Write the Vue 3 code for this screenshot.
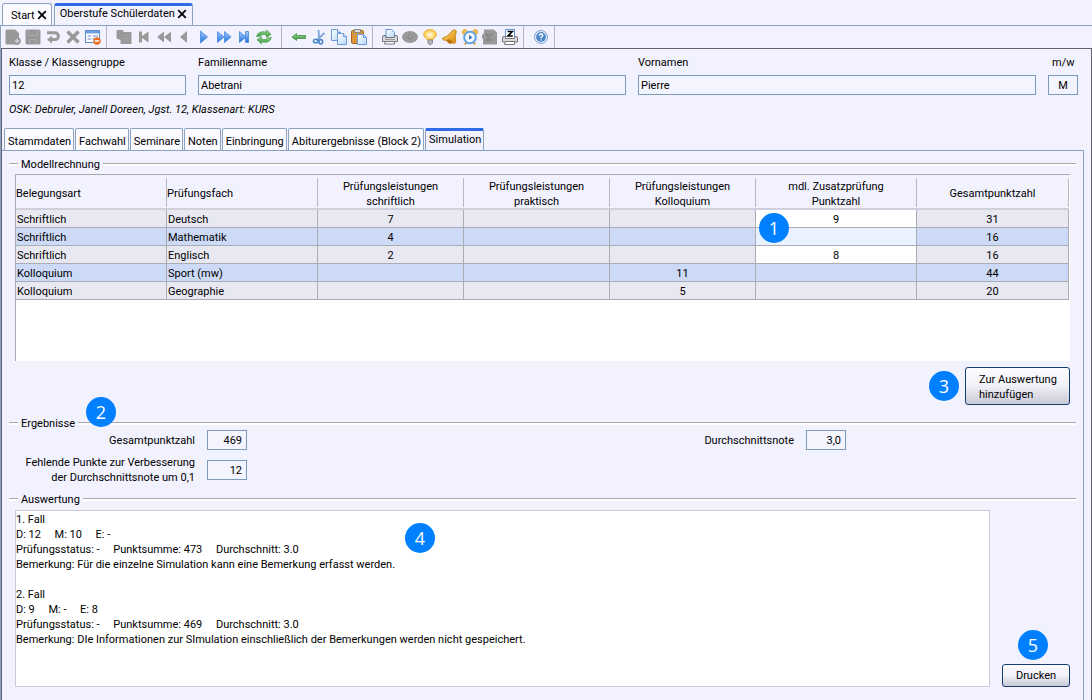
<script setup>
import { ref } from 'vue'

const subTabs = ['Stammdaten', 'Fachwahl', 'Seminare', 'Noten', 'Einbringung', 'Abiturergebnisse (Block 2)', 'Simulation']
const activeTab = ref('Simulation')

const groups = [
  ['Neu', 'Speichern', 'Rückgängig', 'Löschen', 'Formular'],
  ['Datensätze', 'Erster', 'Schnell zurück', 'Zurück', 'Weiter', 'Schnell vor', 'Letzter', 'Aktualisieren'],
  ['Pfeil zurück', 'Ausschneiden', 'Kopieren', 'Einfügen'],
  ['Drucken', 'Ansicht', 'Hinweis', 'Glocke', 'Wecker', 'Summe', 'Zeugnisdruck'],
  ['Hilfe'],
]

const rows = ref([
  { art: 'Schriftlich', fach: 'Deutsch', s: '7', p: '', k: '', z: '9', edit: true, g: '31' },
  { art: 'Schriftlich', fach: 'Mathematik', s: '4', p: '', k: '', z: '', edit: true, g: '16' },
  { art: 'Schriftlich', fach: 'Englisch', s: '2', p: '', k: '', z: '8', edit: true, g: '16' },
  { art: 'Kolloquium', fach: 'Sport (mw)', s: '', p: '', k: '11', z: '', edit: false, g: '44' },
  { art: 'Kolloquium', fach: 'Geographie', s: '', p: '', k: '5', z: '', edit: false, g: '20' },
])

const report = ref(`1. Fall
D: 12     M: 10     E: -
Prüfungsstatus: -     Punktsumme: 473     Durchschnitt: 3.0
Bemerkung: Für die einzelne Simulation kann eine Bemerkung erfasst werden.

2. Fall
D: 9     M: -     E: 8
Prüfungsstatus: -     Punktsumme: 469     Durchschnitt: 3.0
Bemerkung: DIe Informationen zur SImulation einschließlich der Bemerkungen werden nicht gespeichert.`)
</script>

<template>
  <div class="app">
    <svg class="defs" width="0" height="0" aria-hidden="true">
      <defs>
        <linearGradient id="gBlue" x1="0" y1="0" x2="0" y2="1"><stop offset="0" stop-color="#a8d0ff" /><stop offset="1" stop-color="#1f6fdc" /></linearGradient>
        <linearGradient id="gGreen" x1="0" y1="0" x2="0" y2="1"><stop offset="0" stop-color="#a5dd98" /><stop offset="1" stop-color="#2f9137" /></linearGradient>
        <linearGradient id="gPaper" x1="0" y1="0" x2="1" y2="1"><stop offset="0" stop-color="#ffffff" /><stop offset="1" stop-color="#b9d8f7" /></linearGradient>
        <linearGradient id="gGold" x1="0" y1="0" x2="1" y2="1"><stop offset="0" stop-color="#fbd774" /><stop offset="1" stop-color="#d98a08" /></linearGradient>
        <radialGradient id="gBulb"><stop offset="0" stop-color="#fffdf0" /><stop offset="1" stop-color="#ffc83a" /></radialGradient>
      </defs>
    </svg>

    <nav class="doc-tabs" aria-label="Dokumente">
      <div class="doc-tab">
        <button type="button" class="tab-name">Start</button>
        <button type="button" class="close" aria-label="Start schließen">
          <svg width="10" height="10" viewBox="0 0 10 10"><path d="M1.2 1.2L8.8 8.8M8.8 1.2L1.2 8.8" stroke="#000" stroke-width="1.8" /></svg>
        </button>
      </div>
      <div class="doc-tab current">
        <button type="button" class="tab-name">Oberstufe Schülerdaten</button>
        <button type="button" class="close" aria-label="Oberstufe Schülerdaten schließen">
          <svg width="10" height="10" viewBox="0 0 10 10"><path d="M1.2 1.2L8.8 8.8M8.8 1.2L1.2 8.8" stroke="#000" stroke-width="1.8" /></svg>
        </button>
      </div>
    </nav>

    <div class="window">
      <div class="toolbar" role="toolbar" aria-label="Werkzeuge">
        <div v-for="(group, gi) in groups" :key="gi" class="tool-group" :class="'tg' + gi">
          <button v-for="name in group" :key="name" type="button" class="tool" :aria-label="name">
            <svg width="16" height="16" viewBox="0 0 16 16">
              <g v-if="name === 'Neu'"><path d="M2 0.5H10L14 4V9A4 4 0 0 1 13 15.5H2Q0.5 15.5 0.5 14V2Q0.5 0.5 2 0.5Z" fill="#999" /><circle cx="12" cy="12" r="3.8" fill="#999" /><path d="M12 9.8V14.2M9.8 12H14.2" stroke="#d2d2da" stroke-width="1.3" /></g>
              <g v-else-if="name === 'Speichern'"><rect x="0.5" y="0.5" width="15" height="15" rx="1.5" fill="#999" /><path d="M3.5 1V6.5H12.5V1M4.5 15V10.5H11.5V15" fill="none" stroke="#ababaf" /></g>
              <g v-else-if="name === 'Rückgängig'"><path d="M2 3.8H10A3.4 3.4 0 0 1 10 10.6H6" fill="none" stroke="#999" stroke-width="3" /><path d="M2 10.6L7 6.6V14.6Z" fill="#999" /></g>
              <path v-else-if="name === 'Löschen'" d="M2.5 2.5L13.5 13.5M13.5 2.5L2.5 13.5" stroke="#999" stroke-width="3.4" />
              <g v-else-if="name === 'Formular'"><rect x="0.5" y="1.5" width="14" height="12" fill="#fff" stroke="#5c8bc9" /><rect x="1" y="2" width="13" height="2.5" fill="#6fa0df" /><path d="M2.5 7H6M2.5 10H6" stroke="#5f86c2" stroke-width="1.2" /><path d="M7.5 7H13M7.5 10H11" stroke="#8fb4e4" stroke-width="1.4" /><circle cx="12" cy="12" r="3.7" fill="#e96e20" /><path d="M9.8 12H14.2" stroke="#fff" stroke-width="1.5" /></g>
              <g v-else-if="name === 'Datensätze'"><path d="M0.5 1.5Q4 0 7.5 1.5V3H15.5V15H4.5V11L0.5 9.5Z" fill="#999" /><path d="M6 6.5H14M6 9.5H14M6 12.500H14" stroke="#a9a9ad" stroke-width="0.6" /></g>
              <path v-else-if="name === 'Erster'" d="M3 2.5H6V7L12.5 2.5V13.5L6 9V13.5H3Z" fill="#999" />
              <path v-else-if="name === 'Schnell zurück'" d="M8 2.5V13.5L1 8ZM15 2.5V13.5L8 8Z" fill="#999" />
              <path v-else-if="name === 'Zurück'" d="M11 2V14L4 8Z" fill="#999" />
              <path v-else-if="name === 'Weiter'" d="M4.5 2L11.5 8L4.5 14Z" fill="url(#gBlue)" stroke="#4287df" stroke-width="0.8" />
              <path v-else-if="name === 'Schnell vor'" d="M1.5 2.5L8 8L1.5 13.5ZM8.5 2.5L15 8L8.5 13.5Z" fill="url(#gBlue)" stroke="#4287df" stroke-width="0.8" />
              <path v-else-if="name === 'Letzter'" d="M3.5 2.5L9.5 7.5V2.5H12.5V13.5H9.5V8.5L3.5 13.5Z" fill="url(#gBlue)" stroke="#4287df" stroke-width="0.8" />
              <g v-else-if="name === 'Aktualisieren'" fill="url(#gGreen)" stroke="#46994a" stroke-width="0.7"><path d="M0.6 7.5Q2 2.2 8 2.8L10.5 3.3V1L15 5.2L10.5 8.4V6Q5.5 4.5 4.2 7.2Z" /><path d="M15.4 8.5Q14 13.8 8 13.2L5.5 12.7V15L1 10.8L5.5 7.6V10Q10.5 11.5 11.8 8.8Z" /></g>
              <path v-else-if="name === 'Pfeil zurück'" d="M1 8L5.5 4.5V6.5H14.5V9.5H5.5V11.5Z" fill="url(#gGreen)" stroke="#3c8f45" stroke-width="0.8" />
              <g v-else-if="name === 'Ausschneiden'" fill="none" stroke="#4b87c8"><path d="M7.5 1L8.2 10M13.5 4L5.5 11.5" stroke="#7aa6d8" stroke-width="1.8" /><ellipse cx="4.8" cy="12" rx="2.3" ry="1.8" stroke-width="1.6" /><ellipse cx="9.8" cy="12.8" rx="1.8" ry="2.2" stroke-width="1.6" /></g>
              <g v-else-if="name === 'Kopieren'" fill="url(#gPaper)" stroke="#6c9cda"><path d="M0.5 0.5H6.5L9.5 3.5V11.5H0.5Z" /><path d="M6.5 0.5V3.5H9.5" /><path d="M6.5 4.5H12.5L15.5 7.5V15.5H6.5Z" /><path d="M12.5 4.5V7.5H15.5" /></g>
              <g v-else-if="name === 'Einfügen'"><rect x="0.5" y="1.5" width="12" height="13" rx="1" fill="#d9963c" stroke="#a3661e" /><rect x="3.5" y="0.5" width="6" height="3" fill="#ddd" stroke="#888" /><path d="M6.5 5.5H12.5L15.5 8.5V15.5H6.5Z" fill="url(#gPaper)" stroke="#6c9cda" /><path d="M12.5 5.5V8.5H15.5" fill="none" stroke="#6c9cda" /></g>
              <g v-else-if="name === 'Drucken'"><path d="M4 8V0.5H9.5L12.5 3.5V8" fill="url(#gPaper)" stroke="#6096dc" /><path d="M0.5 8Q0.5 6.5 2 6.5H3.5V8.5H12.5V6.5H14Q15.5 6.5 15.5 8V12.5H0.5Z" fill="#d9d9dc" stroke="#77777c" /><path d="M3.5 12.5H12.5V15H2.5Z" fill="#fff" stroke="#77777c" /><path d="M3 10.5H13" stroke="#999" /></g>
              <g v-else-if="name === 'Ansicht'"><ellipse cx="8" cy="8" rx="8" ry="6" fill="#999" /><circle cx="8" cy="8" r="2.8" fill="#8c8c8c" /><circle cx="8.5" cy="7.5" r="1" fill="#bbb" /></g>
              <g v-else-if="name === 'Hinweis'"><path d="M5.5 11Q5.5 9.8 3.5 8.8A6.3 4.8 0 1 1 12.5 8.8Q10.5 9.8 10.5 11Z" fill="url(#gBulb)" stroke="#e2a32c" stroke-width="0.9" /><path d="M6 11H10.5V14L9 15.5H7.2L6 14Z" fill="#b8b8bc" stroke="#77777c" stroke-width="0.8" /></g>
              <g v-else-if="name === 'Glocke'"><path d="M13 0.8Q15 1.5 14 4Q12.8 8 13.8 13L12 14.8Q7 10.5 1 11L0.6 9Q6 7.5 8.500 3.5Q10.500 0.5 13 0.8Z" fill="url(#gGold)" stroke="#c07d11" stroke-width="0.8" /><ellipse cx="7.5" cy="12.5" rx="3" ry="1.8" transform="rotate(25 7.5 12.5)" fill="#b86e0a" /></g>
              <g v-else-if="name === 'Wecker'"><circle cx="2.8" cy="3" r="2.5" fill="#f3be4a" stroke="#d49429" stroke-width="0.6" /><circle cx="13.2" cy="3" r="2.5" fill="#f3be4a" stroke="#d49429" stroke-width="0.6" /><path d="M3 15.5L4.5 13M13 15.5L11.5 13" stroke="#d49429" stroke-width="1.8" /><circle cx="8" cy="8.5" r="5.8" fill="#f4f9ff" stroke="#62a0e2" stroke-width="2" /><path d="M7 6L10.5 8.5L7 10.8Z" fill="#3b6db0" /></g>
              <g v-else-if="name === 'Summe'"><path d="M2 0.5H12L15 3.5V15.5H1V10L0 9V6L2 4Z" fill="#999" /><path d="M3.5 5.5H11M3.5 11H11M4 6L8 8.2L4 11" stroke="#858585" stroke-width="1.4" fill="none" /></g>
              <g v-else-if="name === 'Zeugnisdruck'"><path d="M3.5 9V0.5H12.5V9" fill="#fff" stroke="#6096dc" /><path d="M5.5 2.5H10.2L6 7H10.8" fill="none" stroke="#000" stroke-width="1.7" /><path d="M0.5 9Q0.5 7.5 2 7.5H3.5V9.5H12.5V7.5H14Q15.5 7.5 15.5 9V13H0.5Z" fill="#d9d9dc" stroke="#77777c" /><path d="M3.5 12.5H12.5V15.5H2.5Z" fill="#fff" stroke="#77777c" /></g>
              <g v-else><circle cx="8" cy="8" r="6.5" fill="#e4edf9" stroke="#7da3d6" /><circle cx="8" cy="8" r="4.9" fill="#4f86ca" /><path d="M6.2 6.8Q6.3 5 8 5Q9.8 5 9.8 6.5Q9.8 7.5 8 8.4V9.3M8 10.3V11.6" fill="none" stroke="#fff" stroke-width="1.3" /></g>
            </svg>
          </button>
        </div>
      </div>

      <main class="content">
        <div class="person">
          <div class="field"><label for="klasse">Klasse / Klassengruppe</label><input id="klasse" type="text" value="12" /></div>
          <div class="field"><label for="fam">Familienname</label><input id="fam" type="text" value="Abetrani" /></div>
          <div class="field"><label for="vor">Vornamen</label><input id="vor" type="text" value="Pierre" /></div>
          <div class="field mw"><label for="mw">m/w</label><input id="mw" type="text" value="M" /></div>
        </div>
        <p class="osk">OSK: Debruler, Janell Doreen, Jgst. 12, Klassenart: KURS</p>

        <div class="sub-tabs" role="tablist">
          <button v-for="t in subTabs" :key="t" type="button" role="tab" class="sub-tab" :class="{ active: t === activeTab }" :aria-selected="t === activeTab" @click="activeTab = t">{{ t }}</button>
        </div>

        <div class="pane">
          <section class="model">
            <h2 class="legend">Modellrechnung</h2>
            <div class="table-box">
              <table>
                <colgroup><col class="c-art" /><col class="c-fach" /><col class="c-num" /><col class="c-num" /><col class="c-num" /><col class="c-zus" /><col class="c-ges" /></colgroup>
                <thead>
                  <tr>
                    <th class="l"><span>Belegungsart</span></th>
                    <th class="l"><span>Prüfungsfach</span></th>
                    <th><span>Prüfungsleistungen<br />schriftlich</span></th>
                    <th><span>Prüfungsleistungen<br />praktisch</span></th>
                    <th><span>Prüfungsleistungen<br />Kolloquium</span></th>
                    <th><span>mdl. Zusatzprüfung<br />Punktzahl</span></th>
                    <th><span>Gesamtpunktzahl</span></th>
                  </tr>
                </thead>
                <tbody>
                  <tr v-for="r in rows" :key="r.fach">
                    <td class="l">{{ r.art }}</td>
                    <td class="l">{{ r.fach }}</td>
                    <td>{{ r.s }}</td>
                    <td>{{ r.p }}</td>
                    <td>{{ r.k }}</td>
                    <td :class="{ edit: r.edit }"><input v-if="r.edit" v-model="r.z" type="text" :aria-label="'Zusatzprüfung ' + r.fach" /></td>
                    <td>{{ r.g }}</td>
                  </tr>
                </tbody>
              </table>
              <span class="badge b1">1</span>
            </div>
            <div class="add-row">
              <span class="num">3</span>
              <button type="button" class="btn add">Zur Auswertung<br />hinzufügen</button>
            </div>
          </section>

          <section class="results">
            <h2 class="legend">Ergebnisse</h2>
            <span class="badge b2">2</span>
            <div class="result-grid">
              <label for="gp">Gesamtpunktzahl</label>
              <input id="gp" type="text" value="469" />
              <label for="dn">Durchschnittsnote</label>
              <input id="dn" type="text" value="3,0" />
              <label for="fp" class="first">Fehlende Punkte zur Verbesserung<br />der Durchschnittsnote um 0,1</label>
              <input id="fp" type="text" value="12" />
            </div>
          </section>

          <section class="report">
            <h2 id="report-title" class="legend">Auswertung</h2>
            <div class="report-row">
              <div class="report-box">
                <textarea v-model="report" aria-labelledby="report-title" spellcheck="false"></textarea>
                <span class="badge b4">4</span>
              </div>
              <div class="print-col">
                <span class="num">5</span>
                <button type="button" class="btn print">Drucken</button>
              </div>
            </div>
          </section>
        </div>
      </main>
    </div>
  </div>
</template>

<style>
body {
  background: #f2f2ff;
}
</style>

<style scoped>
.app,
.app * {
  box-sizing: border-box;
}
.app {
  display: flex;
  flex-direction: column;
  min-height: 100vh;
  background: #f2f2ff;
  color: #000;
  font: 11px/15px Roboto, "Open Sans", sans-serif;
}
.defs {
  position: absolute;
}
button,
input,
textarea {
  font: inherit;
  color: inherit;
  margin: 0;
}
button {
  cursor: pointer;
}
.doc-tabs {
  display: flex;
  gap: 2px;
  height: 25px;
  padding: 3px 0 0 2px;
}
.doc-tab {
  display: flex;
  align-items: center;
  gap: 2px;
  padding: 1px 4px 0 8px;
  border: 1px solid #8ba2c0;
  border-bottom: 0;
  border-radius: 3px 3px 0 0;
  background: #fafaff;
}
.doc-tab.current {
  padding: 0 5px 4px;
  border-top: 3px solid #2f6be6;
  background: #f2f2ff;
}
.tab-name,
.close {
  padding: 0;
  border: 0;
  background: none;
}
.close {
  display: flex;
}
.window {
  display: flex;
  flex: 1;
  flex-direction: column;
  border-top: 1px solid #8ba2c0;
  border-left: 1px solid #8ba2c0;
}
.toolbar {
  display: flex;
  height: 22px;
  padding-left: 2px;
}
.tool-group {
  display: flex;
  align-items: center;
  padding-right: 3px;
  margin-right: 7px;
  border-right: 1px solid #b4b4be;
}
.tg1 {
  padding-right: 7px;
}
.tool {
  display: flex;
  width: 20px;
  padding: 2px;
  border: 0;
  background: none;
}
.content {
  display: flex;
  flex: 1;
  flex-direction: column;
  border: 1px solid #62626e;
  border-bottom: 0;
}
.person {
  display: grid;
  grid-template-columns: 177px 428fr 398fr 30px;
  gap: 12px;
  padding: 6px 13px 0 7px;
}
.field {
  display: flex;
  flex-direction: column;
  gap: 5px;
  min-width: 0;
}
.field input,
.result-grid input {
  width: 100%;
  height: 20px;
  padding: 0 2px;
  border: 1px solid #7a9abf;
  background: #f4f4ff;
}
.mw label {
  padding-left: 4px;
}
.mw input {
  text-align: center;
}
.osk {
  margin: 7px 0 0 7px;
  font-style: italic;
}
.sub-tabs {
  display: flex;
  gap: 1px;
  height: 33px;
  padding: 11px 0 0 2px;
}
.sub-tab {
  padding: 3px 2px 0 3px;
  border: 1px solid #8ba2c0;
  border-bottom: 0;
  border-radius: 2px 2px 0 0;
  background: #fafaff;
  white-space: nowrap;
}
.sub-tab.active {
  margin-bottom: -1px;
  padding-bottom: 3px;
  padding-top: 0;
  border-top: 3px solid #2f6be6;
  background: #f2f2ff;
}
.pane {
  display: flex;
  flex: 1;
  flex-direction: column;
  margin-right: 7px;
  padding: 6px 7px 13px;
  border-top: 1px solid #8ba2c0;
  border-right: 1px solid #8ba2c0;
}
.legend {
  display: flex;
  align-items: center;
  gap: 3px;
  height: 14px;
  margin: 0;
  font: inherit;
}
.legend::before,
.legend::after {
  width: 9px;
  height: 2px;
  border-top: 1px solid #a8a8b0;
  background: #fff;
  content: "";
}
.legend::after {
  flex: 1;
}
.table-box {
  position: relative;
  height: 187px;
  margin: 3px 6px 0;
  padding-right: 1px;
  border-top: 1px solid #a8a8b0;
  border-left: 1px solid #a8a8b0;
  background: #fff;
}
table {
  width: 100%;
  border-spacing: 0;
  table-layout: fixed;
}
.c-art,
.c-fach {
  width: 151px;
}
.c-zus {
  width: 161px;
}
.c-ges {
  width: 152px;
}
th {
  height: 35px;
  padding: 3px 0 1px;
  border-bottom: 2px solid #d0d0dc;
  background: #f2f2ff;
  font-weight: 400;
}
th span {
  display: flex;
  align-items: center;
  justify-content: center;
  height: 29px;
  padding-top: 2px;
  border-right: 1px solid #b8b8c2;
  text-align: center;
}
th.l span {
  justify-content: flex-start;
}
td {
  height: 18px;
  padding: 1px 0 0;
  border-right: 1px solid #acacb4;
  border-bottom: 1px solid #acacb4;
  background: #e8e8f2;
  text-align: center;
}
td.l {
  padding-left: 1px;
  text-align: left;
}
tr:nth-child(even) td {
  background: #ccdaf7;
}
tbody tr td.edit {
  background: #fff;
}
tbody tr:nth-child(even) td.edit {
  background: #eaf1ff;
}
td input {
  display: block;
  width: 100%;
  height: 16px;
  padding: 0;
  border: 0;
  background: none;
  text-align: center;
}
.badge,
.num {
  display: flex;
  align-items: center;
  justify-content: center;
  width: 30px;
  height: 30px;
  border-radius: 50%;
  background: #0080ff;
  color: #fff;
  font-family: "Open Sans", sans-serif;
  font-size: 18px;
}
.badge {
  position: absolute;
}
.b1 {
  top: 38px;
  right: 281px;
}
.b2 {
  top: -19px;
  left: 77px;
}
.b4 {
  top: 13px;
  left: 390px;
}
.add-row {
  display: flex;
  align-items: center;
  justify-content: flex-end;
  gap: 6px;
  margin: 6px 6px 0;
}
.btn {
  border: 1px solid #173c72;
  border-radius: 3px;
  background: linear-gradient(#fdfdff, #f0f0f8 50%, #c9c9d6);
}
.add {
  width: 105px;
  height: 38px;
  padding: 1px 0 0 13px;
  text-align: left;
}
.results {
  position: relative;
  margin-top: 11px;
}
.result-grid {
  display: grid;
  grid-template-columns: 186px 40px 1fr 40px 218px;
  column-gap: 12px;
  row-gap: 5px;
  align-items: center;
  text-align: right;
}
.result-grid label {
  white-space: nowrap;
}
.result-grid label.first {
  grid-column: 1;
}
.result-grid input {
  padding-right: 4px;
  text-align: right;
}
.report {
  display: flex;
  flex: 1;
  flex-direction: column;
  margin-top: 7px;
}
.report-row {
  display: flex;
  flex: 1;
  gap: 12px;
  margin: 4px 6px 0;
}
.report-box {
  position: relative;
  display: flex;
  flex: 1;
}
textarea {
  flex: 1;
  min-height: 177px;
  padding: 1px 0;
  border: 1px solid #cbcbd8;
  background: #fff;
  resize: none;
}
.print-col {
  display: flex;
  flex-direction: column;
  align-items: center;
  justify-content: flex-end;
  gap: 4px;
  width: 68px;
}
.print-col .num {
  margin-right: 6px;
}
.print {
  width: 100%;
  height: 23px;
  padding: 0;
}
</style>
